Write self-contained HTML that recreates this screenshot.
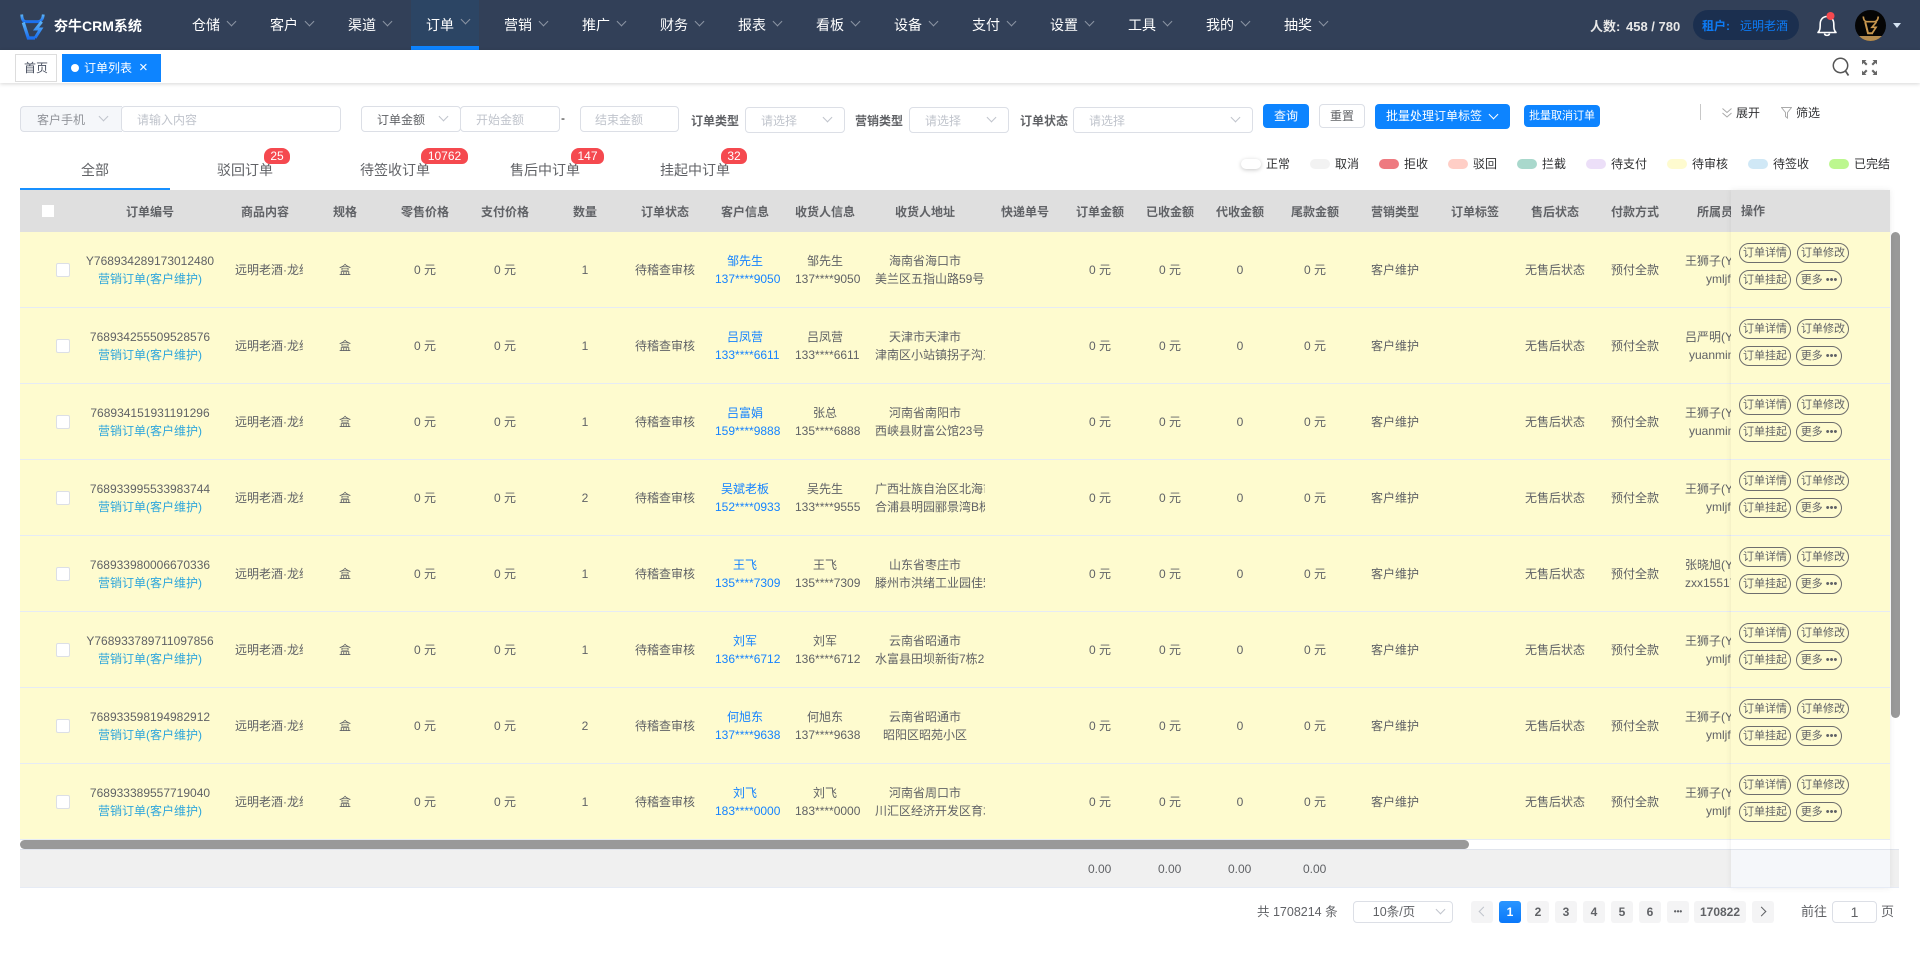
<!DOCTYPE html>
<html lang="zh"><head><meta charset="utf-8"><title>订单列表</title>
<style>
*{box-sizing:border-box}
html,body{margin:0;padding:0;width:1920px;height:953px;overflow:hidden;background:#fff;font-family:"Liberation Sans","Noto Sans CJK SC",sans-serif;font-size:12px;color:#606266}
.a{position:absolute;white-space:nowrap}
.box{position:absolute;background:#fff;border:1px solid #dcdfe6;border-radius:4px}
.ch{position:absolute;width:7px;height:7px;border-right:1px solid #c0c4cc;border-bottom:1px solid #c0c4cc;transform:rotate(45deg)}
#top{position:absolute;left:0;top:0;width:1920px;height:50px;background:#324058}
.nav{position:absolute;top:0;line-height:50px;font-size:14px;color:#fff}
.nch{position:absolute;top:18px;width:7px;height:7px;border-right:1px solid #8b94a3;border-bottom:1px solid #8b94a3;transform:rotate(45deg)}
#tabs{position:absolute;left:0;top:50px;width:1920px;height:33px;background:#fff;box-shadow:0 1px 4px rgba(0,0,0,.16)}
.ph{color:#c0c4cc;line-height:28px}
.lb{font-weight:700;line-height:22px}
.btn{position:absolute;background:#0d84ff;color:#fff;text-align:center;border-radius:4px}
.tab{position:absolute;top:159px;font-size:14px;line-height:22px;color:#606266;text-align:center;width:150px}
.bdg{position:absolute;top:148px;height:16px;border-radius:8px 8px 6px 6px;background:#f5494f;color:#fff;font-size:12px;line-height:17px;text-align:center}
.sw{position:absolute;top:159px;width:20px;height:10px;border-radius:5px}
.lg{position:absolute;top:155px;line-height:18px;color:#303133;white-space:nowrap}
#tw{position:absolute;left:20px;top:190px;width:1871px;height:650px;overflow:hidden}
table{border-collapse:separate;border-spacing:0;table-layout:fixed;width:1871px}
th{height:42px;background:#dfdfdf;font-weight:700;color:#606266;padding:0 10px;text-align:center;white-space:nowrap;overflow:hidden;font-size:12px}
td{height:76px;background:#fefbcf;border-bottom:1px solid #e6ebf5;padding:0 10px;text-align:center;white-space:nowrap;overflow:hidden;line-height:18px;font-size:12px}
td.l,th.l{text-align:left;padding-left:10px}
td i{font-style:normal;display:block}
td.p i{width:68px;overflow:hidden}
.bl{color:#1583ff}.sb{color:#2ea6db}
.ck{display:inline-block;width:14px;height:14px;background:#fff;border:1px solid #dcdfe6;border-radius:2px;vertical-align:middle;margin-left:31px;margin-top:-1px}
.u2{padding-left:21px}
#fx{position:absolute;left:1731px;top:190px;width:159px;height:698px;background:#fff;box-shadow:0 0 6px rgba(0,0,0,.08)}
#fx .h{height:42px;background:#dfdfdf;font-weight:700;line-height:42px;padding-left:10px}
#fx .r{position:relative;height:76px;background:#fefbcf;border-bottom:1px solid #e6ebf5}
#fx .f{position:absolute;left:0;top:659px;width:159px;height:39px;background:#f5f7fa;border-top:1px solid #e0e4ec;border-bottom:1px solid #e6ebf5}
.op{position:absolute;width:52px;height:20px;border:1px solid #6e6e6e;border-radius:10px;font-size:11px;line-height:18px;text-align:center;color:#606266;white-space:nowrap}
.b1{left:8px;top:11px}.b2{left:66px;top:11px}.b3{left:8px;top:38px}.b4{left:65px;top:38px;width:46px}
.ft{position:absolute;top:869px;margin-top:-9px;line-height:18px}
.pg{position:absolute;top:901px;width:22px;height:22px;background:#f4f4f5;border-radius:3px;font-weight:700;text-align:center;line-height:22px;color:#606266}
.pa{position:absolute;top:7px;width:7px;height:7px;border-left:1px solid #606266;border-bottom:1px solid #606266}
</style></head><body>

<div id="top">
<svg class="a" style="left:18px;top:12px" width="28" height="28" viewBox="0 0 28 28"><defs><linearGradient id="lg1" x1="0" y1="0" x2="0" y2="1"><stop offset="0" stop-color="#5db4f5"/><stop offset="1" stop-color="#1a6ff0"/></linearGradient></defs><path d="M3.700 2.500C3.900 6.500 5 9.700 8 9.700H19.500C23.200 9.700 25 6.500 25.300 2.500" fill="none" stroke="url(#lg1)" stroke-width="2.800"/><path d="M5.300 10.500L10.300 26H17" fill="none" stroke="url(#lg1)" stroke-width="3.200"/><path d="M23.700 9.700L18 17H22.700L17 26" fill="none" stroke="url(#lg1)" stroke-width="3"/></svg>
<div class="a" style="left:54px;top:16px;line-height:20px;font-size:14px;font-weight:700;color:#fff">夯牛CRM系统</div>
<div class="a" style="left:411px;top:0;width:68px;height:50px;background:#2c4564;border-bottom:4px solid #0d84ff"></div>
<div class="nav" style="left:192px">仓储</div><div class="nch" style="left:228px"></div>
<div class="nav" style="left:270px">客户</div><div class="nch" style="left:306px"></div>
<div class="nav" style="left:348px">渠道</div><div class="nch" style="left:384px"></div>
<div class="nav" style="left:426px">订单</div><div class="nch" style="left:462px;top:16px"></div>
<div class="nav" style="left:504px">营销</div><div class="nch" style="left:540px"></div>
<div class="nav" style="left:582px">推广</div><div class="nch" style="left:618px"></div>
<div class="nav" style="left:660px">财务</div><div class="nch" style="left:696px"></div>
<div class="nav" style="left:738px">报表</div><div class="nch" style="left:774px"></div>
<div class="nav" style="left:816px">看板</div><div class="nch" style="left:852px"></div>
<div class="nav" style="left:894px">设备</div><div class="nch" style="left:930px"></div>
<div class="nav" style="left:972px">支付</div><div class="nch" style="left:1008px"></div>
<div class="nav" style="left:1050px">设置</div><div class="nch" style="left:1086px"></div>
<div class="nav" style="left:1128px">工具</div><div class="nch" style="left:1164px"></div>
<div class="nav" style="left:1206px">我的</div><div class="nch" style="left:1242px"></div>
<div class="nav" style="left:1284px">抽奖</div><div class="nch" style="left:1320px"></div>
<div class="a" style="left:1590px;top:17px;line-height:20px;font-size:13px;font-weight:700;color:#e8e8e8">人数:</div>
<div class="a" style="left:1626px;top:17px;line-height:20px;font-size:13px;font-weight:700;color:#e8e8e8">458 / 780</div>
<div class="a" style="left:1693px;top:10px;width:106px;height:30px;border-radius:15px;background:#1b2f4f"></div>
<div class="a" style="left:1702px;top:16px;line-height:20px;font-size:12px;color:#0d7bf5"><b>租户:</b></div>
<div class="a" style="left:1740px;top:16px;line-height:20px;font-size:12px;color:#0d7bf5">远明老酒</div>
<svg class="a" style="left:1815px;top:11px" width="24" height="27" viewBox="0 0 24 27"><path d="M3 21.500C5 19.500 5.200 17.500 5.200 13C5.200 8.500 8 5.500 12 5.500C16 5.500 18.800 8.500 18.800 13C18.800 17.500 19 19.500 21 21.500Z" fill="none" stroke="#fff" stroke-width="1.600" stroke-linejoin="round"/><path d="M9.500 22.500C9.800 25 14.200 25 14.500 22.500" fill="none" stroke="#fff" stroke-width="1.600"/><circle cx="15.500" cy="5" r="4" fill="#f5494f"/></svg>
<svg class="a" style="left:1855px;top:10px" width="31" height="31" viewBox="0 0 31 31"><defs><clipPath id="av"><circle cx="15.500" cy="15.500" r="15.500"/></clipPath></defs><circle cx="15.500" cy="15.500" r="15.500" fill="#050505"/><path d="M8.300 6.500C8.500 9.500 9.500 11.700 12 11.700H19.500C22 11.700 23 9.500 23.300 6.500" fill="none" stroke="#c8974f" stroke-width="1.700"/><path d="M10.200 12L13 23.300H18" fill="none" stroke="#c8974f" stroke-width="2"/><path d="M21.500 12L17 17.300H21L17 23.500" fill="none" stroke="#c8974f" stroke-width="1.700"/><rect x="0" y="26" width="31" height="5" fill="#b58c50" clip-path="url(#av)"/></svg>
<div class="a" style="left:1893px;top:23px;width:0;height:0;border-left:4px solid transparent;border-right:4px solid transparent;border-top:5px solid #d5e3f2"></div>
</div>

<div id="tabs"></div>
<div class="a" style="left:15px;top:54px;width:42px;height:28px;border:1px solid #ddd;text-align:center;line-height:26px;color:#495060">首页</div>
<div class="a" style="left:62px;top:54px;width:99px;height:28px;background:#0d84ff;color:#fff;line-height:28px"><span class="a" style="left:9px;top:10px;width:8px;height:8px;border-radius:4px;background:#fff"></span><span class="a" style="left:22px;top:0">订单列表</span><span class="a" style="left:77px;top:0;font-size:15px">×</span></div>
<svg class="a" style="left:1831px;top:56px" width="20" height="22" viewBox="0 0 20 22"><circle cx="9.500" cy="9.500" r="7.200" fill="none" stroke="#555" stroke-width="1.500"/><path d="M14.500 15L17.500 19.500" stroke="#555" stroke-width="1.700"/></svg>
<svg class="a" style="left:1862px;top:60px" width="15" height="15" viewBox="0 0 15 15" fill="#666"><path d="M0 0H4.500L3 1.500L5.500 4L4 5.500L1.500 3L0 4.500ZM15 0H10.500L12 1.500L9.500 4L11 5.500L13.500 3L15 4.500ZM0 15H4.500L3 13.500L5.500 11L4 9.500L1.500 12L0 10.500ZM15 15H10.500L12 13.500L9.500 11L11 9.500L13.500 12L15 10.500Z"/></svg>

<div class="box" style="left:20px;top:106px;width:102px;height:26px;background:#f5f7fa;border-radius:4px 0 0 4px;border-right:0"></div>
<div class="a ph" style="left:37px;top:106px;color:#909399">客户手机</div><div class="ch" style="left:100px;top:113px"></div>
<div class="box" style="left:121px;top:106px;width:220px;height:26px"></div><div class="a ph" style="left:137px;top:106px">请输入内容</div>
<div class="box" style="left:361px;top:106px;width:100px;height:26px"></div><div class="a ph" style="left:377px;top:106px;color:#606266">订单金额</div><div class="ch" style="left:440px;top:113px"></div>
<div class="box" style="left:460px;top:106px;width:100px;height:26px"></div><div class="a ph" style="left:476px;top:106px">开始金额</div>
<div class="a" style="left:561px;top:109px;line-height:18px;color:#111">-</div>
<div class="box" style="left:580px;top:106px;width:99px;height:26px"></div><div class="a ph" style="left:595px;top:106px">结束金额</div>
<div class="a lb" style="left:691px;top:110px">订单类型</div>
<div class="box" style="left:745px;top:107px;width:100px;height:26px"></div><div class="a ph" style="left:761px;top:107px">请选择</div><div class="ch" style="left:824px;top:114px"></div>
<div class="a lb" style="left:855px;top:110px">营销类型</div>
<div class="box" style="left:909px;top:107px;width:100px;height:26px"></div><div class="a ph" style="left:925px;top:107px">请选择</div><div class="ch" style="left:988px;top:114px"></div>
<div class="a lb" style="left:1020px;top:110px">订单状态</div>
<div class="box" style="left:1073px;top:107px;width:180px;height:26px"></div><div class="a ph" style="left:1089px;top:107px">请选择</div><div class="ch" style="left:1232px;top:114px"></div>
<div class="btn" style="left:1263px;top:104px;width:46px;height:24px;line-height:24px">查询</div>
<div class="box" style="left:1319px;top:104px;width:46px;height:24px;line-height:22px;text-align:center">重置</div>
<div class="btn" style="left:1375px;top:104px;width:135px;height:25px;line-height:25px;text-align:left;padding-left:11px">批量处理订单标签<span class="ch" style="left:115px;top:7px;border-color:#fff"></span></div>
<div class="btn" style="left:1524px;top:105px;width:76px;height:22px;line-height:23px;font-size:11px">批量取消订单</div>
<div class="a" style="left:1700px;top:104px;width:1px;height:16px;background:#c8c8c8"></div>
<svg class="a" style="left:1722px;top:107px" width="10" height="12" viewBox="0 0 10 12" fill="none" stroke="#aaa"><path d="M.5 1.500L5 5.500L9.500 1.500M.5 6L5 10L9.500 6"/></svg>
<div class="a" style="left:1736px;top:104px;line-height:18px;color:#303133">展开</div>
<svg class="a" style="left:1781px;top:107px" width="11" height="12" viewBox="0 0 11 12" fill="none" stroke="#aaa"><path d="M.5 .5H10.500L6.500 5.500V11L4.500 9.500V5.500Z"/></svg>
<div class="a" style="left:1796px;top:104px;line-height:18px;color:#303133">筛选</div>

<div class="tab" style="left:20px">全部</div>
<div class="a" style="left:20px;top:188px;width:150px;height:2px;background:#1890ff"></div>
<div class="tab" style="left:170px">驳回订单</div><div class="bdg" style="left:264px;width:26px">25</div>
<div class="tab" style="left:320px">待签收订单</div><div class="bdg" style="left:421px;width:47px">10762</div>
<div class="tab" style="left:470px">售后中订单</div><div class="bdg" style="left:571px;width:33px">147</div>
<div class="tab" style="left:620px">挂起中订单</div><div class="bdg" style="left:721px;width:26px">32</div>

<div class="sw" style="left:1241px;background:#fff;box-shadow:0 1px 4px rgba(0,0,0,.22)"></div><div class="lg" style="left:1266px">正常</div>
<div class="sw" style="left:1310px;background:#f2f2f2"></div><div class="lg" style="left:1335px">取消</div>
<div class="sw" style="left:1379px;background:#ee7a80"></div><div class="lg" style="left:1404px">拒收</div>
<div class="sw" style="left:1448px;background:#ffcec6"></div><div class="lg" style="left:1473px">驳回</div>
<div class="sw" style="left:1517px;background:#a9d8cc"></div><div class="lg" style="left:1542px">拦截</div>
<div class="sw" style="left:1586px;background:#ecdff8"></div><div class="lg" style="left:1611px">待支付</div>
<div class="sw" style="left:1667px;background:#fefbcf"></div><div class="lg" style="left:1692px">待审核</div>
<div class="sw" style="left:1748px;background:#d0e8f6"></div><div class="lg" style="left:1773px">待签收</div>
<div class="sw" style="left:1829px;background:#bcf78f"></div><div class="lg" style="left:1854px">已完结</div>

<div id="tw"><table>
<colgroup><col style="width:55px"><col style="width:150px"><col span="8" style="width:80px"><col style="width:120px"><col style="width:80px"><col span="3" style="width:70px"><col span="6" style="width:80px"><col style="width:136px"></colgroup>
<tr><th style="padding:0"><span style="display:inline-block;width:12px;height:12px;background:#fff;position:relative;top:1px"></span></th><th>订单编号</th><th>商品内容</th><th>规格</th><th>零售价格</th><th>支付价格</th><th>数量</th><th>订单状态</th><th>客户信息</th><th>收货人信息</th><th>收货人地址</th><th>快递单号</th><th>订单金额</th><th>已收金额</th><th>代收金额</th><th>尾款金额</th><th>营销类型</th><th>订单标签</th><th>售后状态</th><th>付款方式</th><th class="l" style="padding-left:22px">所属员工</th></tr>
<tr><td style="padding:0"><span class="ck"></span></td><td><i>Y768934289173012480</i><i class="sb">营销订单(客户维护)</i></td><td class="l p"><i>远明老酒·龙纹</i></td><td>盒</td><td>0 元</td><td>0 元</td><td>1</td><td>待稽查审核</td><td class="bl"><i>邹先生</i><i>137****9050</i></td><td><i>邹先生</i><i>137****9050</i></td><td><i>海南省海口市</i><i>美兰区五指山路59号楼</i></td><td></td><td>0 元</td><td>0 元</td><td>0</td><td>0 元</td><td>客户维护</td><td></td><td>无售后状态</td><td>预付全款</td><td class="l"><i>王狮子(YM</i><i class="u2">ymljf</i></td></tr>
<tr><td style="padding:0"><span class="ck"></span></td><td><i>768934255509528576</i><i class="sb">营销订单(客户维护)</i></td><td class="l p"><i>远明老酒·龙纹</i></td><td>盒</td><td>0 元</td><td>0 元</td><td>1</td><td>待稽查审核</td><td class="bl"><i>吕凤营</i><i>133****6611</i></td><td><i>吕凤营</i><i>133****6611</i></td><td><i>天津市天津市</i><i style="text-align:left">津南区小站镇拐子沟工业</i></td><td></td><td>0 元</td><td>0 元</td><td>0</td><td>0 元</td><td>客户维护</td><td></td><td>无售后状态</td><td>预付全款</td><td class="l"><i>吕严明(YM</i><i style="padding-left:4px">yuanming</i></td></tr>
<tr><td style="padding:0"><span class="ck"></span></td><td><i>768934151931191296</i><i class="sb">营销订单(客户维护)</i></td><td class="l p"><i>远明老酒·龙纹</i></td><td>盒</td><td>0 元</td><td>0 元</td><td>1</td><td>待稽查审核</td><td class="bl"><i>吕富娟</i><i>159****9888</i></td><td><i>张总</i><i>135****6888</i></td><td><i>河南省南阳市</i><i>西峡县财富公馆23号</i></td><td></td><td>0 元</td><td>0 元</td><td>0</td><td>0 元</td><td>客户维护</td><td></td><td>无售后状态</td><td>预付全款</td><td class="l"><i>王狮子(YM</i><i style="padding-left:4px">yuanming</i></td></tr>
<tr><td style="padding:0"><span class="ck"></span></td><td><i>768933995533983744</i><i class="sb">营销订单(客户维护)</i></td><td class="l p"><i>远明老酒·龙纹</i></td><td>盒</td><td>0 元</td><td>0 元</td><td>2</td><td>待稽查审核</td><td class="bl"><i>吴斌老板</i><i>152****0933</i></td><td><i>吴先生</i><i>133****9555</i></td><td><i style="text-align:left">广西壮族自治区北海市</i><i style="text-align:left">合浦县明园郦景湾B栋</i></td><td></td><td>0 元</td><td>0 元</td><td>0</td><td>0 元</td><td>客户维护</td><td></td><td>无售后状态</td><td>预付全款</td><td class="l"><i>王狮子(YM</i><i class="u2">ymljf</i></td></tr>
<tr><td style="padding:0"><span class="ck"></span></td><td><i>768933980006670336</i><i class="sb">营销订单(客户维护)</i></td><td class="l p"><i>远明老酒·龙纹</i></td><td>盒</td><td>0 元</td><td>0 元</td><td>1</td><td>待稽查审核</td><td class="bl"><i>王飞</i><i>135****7309</i></td><td><i>王飞</i><i>135****7309</i></td><td><i>山东省枣庄市</i><i style="text-align:left">滕州市洪绪工业园佳宏</i></td><td></td><td>0 元</td><td>0 元</td><td>0</td><td>0 元</td><td>客户维护</td><td></td><td>无售后状态</td><td>预付全款</td><td class="l"><i>张晓旭(YM</i><i>zxx15517</i></td></tr>
<tr><td style="padding:0"><span class="ck"></span></td><td><i>Y768933789711097856</i><i class="sb">营销订单(客户维护)</i></td><td class="l p"><i>远明老酒·龙纹</i></td><td>盒</td><td>0 元</td><td>0 元</td><td>1</td><td>待稽查审核</td><td class="bl"><i>刘军</i><i>136****6712</i></td><td><i>刘军</i><i>136****6712</i></td><td><i>云南省昭通市</i><i style="text-align:left">水富县田坝新街7栋2号</i></td><td></td><td>0 元</td><td>0 元</td><td>0</td><td>0 元</td><td>客户维护</td><td></td><td>无售后状态</td><td>预付全款</td><td class="l"><i>王狮子(YM</i><i class="u2">ymljf</i></td></tr>
<tr><td style="padding:0"><span class="ck"></span></td><td><i>768933598194982912</i><i class="sb">营销订单(客户维护)</i></td><td class="l p"><i>远明老酒·龙纹</i></td><td>盒</td><td>0 元</td><td>0 元</td><td>2</td><td>待稽查审核</td><td class="bl"><i>何旭东</i><i>137****9638</i></td><td><i>何旭东</i><i>137****9638</i></td><td><i>云南省昭通市</i><i>昭阳区昭苑小区</i></td><td></td><td>0 元</td><td>0 元</td><td>0</td><td>0 元</td><td>客户维护</td><td></td><td>无售后状态</td><td>预付全款</td><td class="l"><i>王狮子(YM</i><i class="u2">ymljf</i></td></tr>
<tr><td style="padding:0"><span class="ck"></span></td><td><i>768933389557719040</i><i class="sb">营销订单(客户维护)</i></td><td class="l p"><i>远明老酒·龙纹</i></td><td>盒</td><td>0 元</td><td>0 元</td><td>1</td><td>待稽查审核</td><td class="bl"><i>刘飞</i><i>183****0000</i></td><td><i>刘飞</i><i>183****0000</i></td><td><i>河南省周口市</i><i style="text-align:left">川汇区经济开发区育才路</i></td><td></td><td>0 元</td><td>0 元</td><td>0</td><td>0 元</td><td>客户维护</td><td></td><td>无售后状态</td><td>预付全款</td><td class="l"><i>王狮子(YM</i><i class="u2">ymljf</i></td></tr>
</table></div>

<div class="a" style="left:20px;top:840px;width:1449px;height:9px;background:#999;border-radius:5px"></div>
<div class="a" style="left:20px;top:849px;width:1879px;height:39px;background:#f0f0f0;border-top:1px solid #e0e4ec;border-bottom:1px solid #e6ebf5"></div>
<div class="ft" style="left:1088px">0.00</div><div class="ft" style="left:1158px">0.00</div><div class="ft" style="left:1228px">0.00</div><div class="ft" style="left:1303px">0.00</div>
<div class="a" style="left:1891px;top:232px;width:9px;height:486px;background:#999;border-radius:5px"></div>

<div id="fx">
<div class="h">操作</div>
<div class="r"><div class="op b1">订单详情</div><div class="op b2">订单修改</div><div class="op b3">订单挂起</div><div class="op b4">更多 •••</div></div>
<div class="r"><div class="op b1">订单详情</div><div class="op b2">订单修改</div><div class="op b3">订单挂起</div><div class="op b4">更多 •••</div></div>
<div class="r"><div class="op b1">订单详情</div><div class="op b2">订单修改</div><div class="op b3">订单挂起</div><div class="op b4">更多 •••</div></div>
<div class="r"><div class="op b1">订单详情</div><div class="op b2">订单修改</div><div class="op b3">订单挂起</div><div class="op b4">更多 •••</div></div>
<div class="r"><div class="op b1">订单详情</div><div class="op b2">订单修改</div><div class="op b3">订单挂起</div><div class="op b4">更多 •••</div></div>
<div class="r"><div class="op b1">订单详情</div><div class="op b2">订单修改</div><div class="op b3">订单挂起</div><div class="op b4">更多 •••</div></div>
<div class="r"><div class="op b1">订单详情</div><div class="op b2">订单修改</div><div class="op b3">订单挂起</div><div class="op b4">更多 •••</div></div>
<div class="r"><div class="op b1">订单详情</div><div class="op b2">订单修改</div><div class="op b3">订单挂起</div><div class="op b4">更多 •••</div></div>
<div class="f"></div>
</div>

<div class="a" style="left:1257px;top:903px;line-height:18px;font-size:12.500px">共 1708214 条</div>
<div class="box" style="left:1353px;top:901px;width:100px;height:22px;text-align:center;line-height:20px;padding-right:18px;font-size:12.500px">10条/页<span class="ch" style="left:83px;top:4px"></span></div>
<div class="pg" style="left:1471px"><span class="pa" style="left:9px;transform:rotate(45deg);border-color:#c0c4cc"></span></div>
<div class="pg" style="left:1499px;background:linear-gradient(#2a96ff,#0a78fa);color:#fff">1</div>
<div class="pg" style="left:1527px">2</div><div class="pg" style="left:1555px">3</div><div class="pg" style="left:1583px">4</div><div class="pg" style="left:1611px">5</div><div class="pg" style="left:1639px">6</div><div class="pg" style="left:1667px;font-size:8px">•••</div>
<div class="pg" style="left:1694px;width:52px">170822</div>
<div class="pg" style="left:1752px"><span class="pa" style="left:6px;transform:rotate(225deg)"></span></div>
<div class="a" style="left:1801px;top:903px;line-height:18px;font-size:13px">前往</div>
<div class="box" style="left:1832px;top:901px;width:45px;height:22px;text-align:center;line-height:20px;font-size:14px">1</div>
<div class="a" style="left:1881px;top:903px;line-height:18px;font-size:13px">页</div>
</body></html>
